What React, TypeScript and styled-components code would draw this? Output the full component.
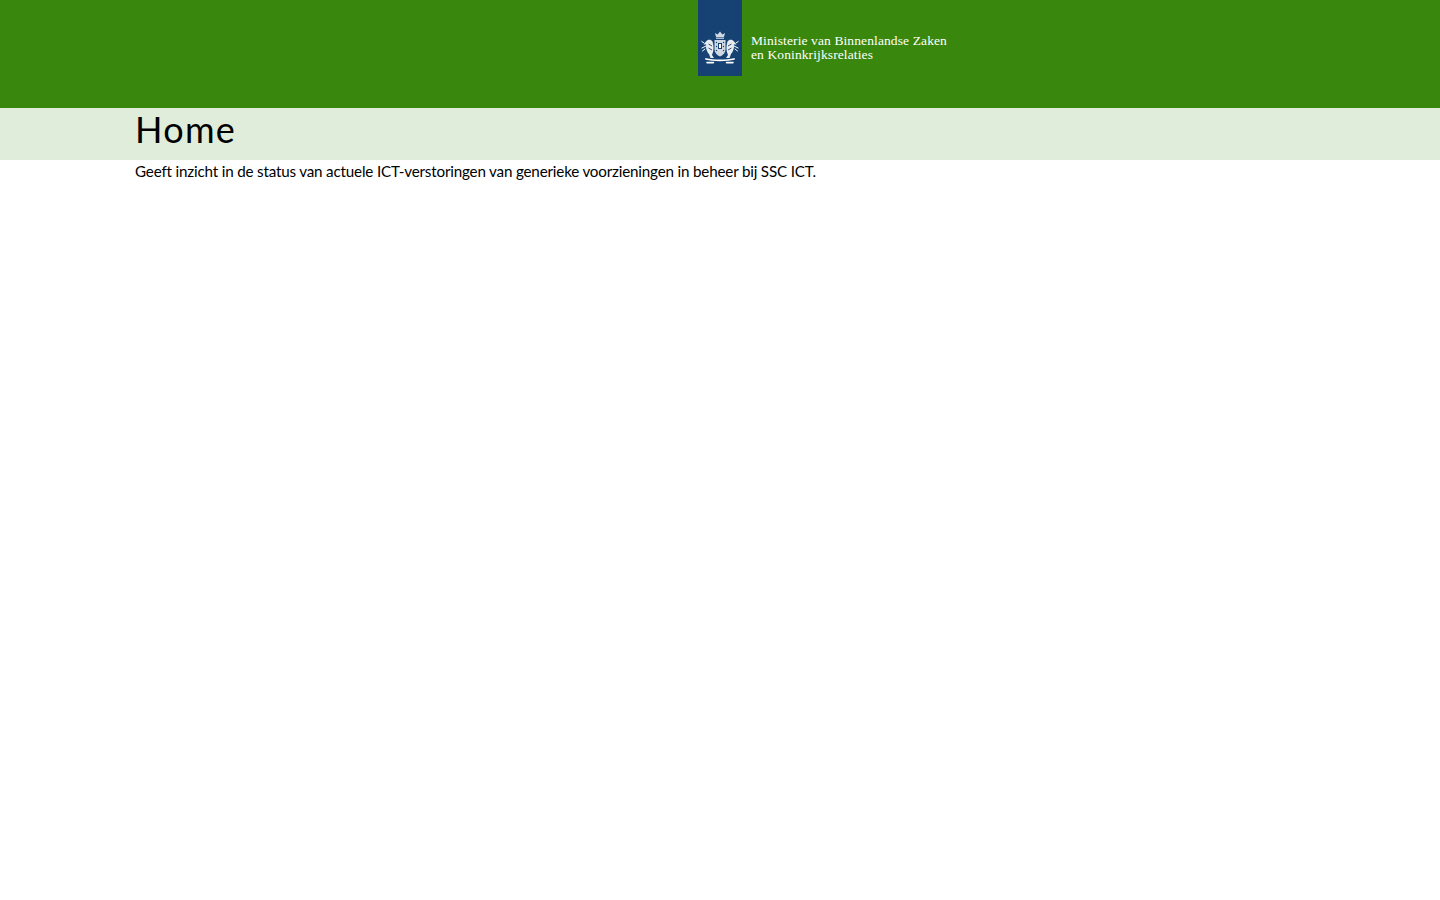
import React from "react";
import styled, { createGlobalStyle } from "styled-components";

const Global = createGlobalStyle`
  html, body { margin: 0; padding: 0; background: #fff; }
  body { font-family: "Lato", "Noto Sans", sans-serif; color: #000; }
`;

const Header = styled.header`
  height: 108px;
  background: #39870c;
  padding-left: calc(50% - 22px);
  box-sizing: border-box;
`;

const Logo = styled.a`
  display: flex;
  align-items: flex-start;
  gap: 9px;
`;

const Ribbon = styled.div`
  width: 44px;
  height: 76px;
  background: #154273;
  display: flex;
  justify-content: center;
  padding-top: 31px;
  box-sizing: border-box;
  flex: none;
`;

const Wordmark = styled.div`
  margin-top: 34px;
  font-family: "Liberation Serif", serif;
  font-size: 13.5px;
  line-height: 14px;
  letter-spacing: 0.11px;
  color: #fff;
  white-space: nowrap;
`;

const TitleBar = styled.div`
  height: 52px;
  background: #e1eddb;
  padding-left: 135px;
`;

const Title = styled.h1`
  margin: 0;
  font-family: "Lato", sans-serif;
  font-weight: 400;
  font-size: 36px;
  line-height: 43px;
  letter-spacing: 1.3px;
`;

const Intro = styled.p`
  margin: 0;
  padding: 2px 0 0 135px;
  font-family: "Lato", sans-serif;
  font-size: 15.2px;
  line-height: 19px;
  letter-spacing: -0.18px;
`;

const Emblem = () => (
  <svg width="38" height="33" viewBox="0 0 38 33" fill="none">
    <g fill="#fff">
      <path d="M15 6 L14 2 L16.6 3.6 L19 0.4 L21.4 3.6 L24 2 L23 6 Z" opacity="0.8" />
      <rect x="15" y="6.6" width="8" height="1.2" opacity="0.8" />
      <path d="M13.5 9 H24.5 V18 C24.5 21.5 22.5 24 19 25.5 C15.5 24 13.5 21.5 13.5 18 Z" opacity="0.8" />
      <path d="M5 10.5 C6.5 8 10 8 11.5 10.5 C13 15 13 20 11 24 L13 27 H9.5 L8 23 C6 21 4.5 17 5.2 13.5 L2.5 13.5 Z" opacity="0.9" />
      <path d="M33 10.5 C31.5 8 28 8 26.5 10.5 C25 15 25 20 27 24 L25 27 H28.5 L30 23 C32 21 33.5 17 32.8 13.5 L35.5 13.5 Z" opacity="0.9" />
    </g>
    <g stroke="#fff" strokeLinecap="round" strokeLinejoin="round" strokeWidth="1">
      <path d="M5 15 L1 17 M3 12 L0.8 10.5 M4 18 L1.5 20" />
      <path d="M33 15 L37 17 M35 12 L37.2 10.5 M34 18 L36.5 20" />
      <path d="M5 28 C12 29.8 26 29.8 33 28" strokeWidth="1.8" />
      <path d="M6 31.6 H12.5 M25.5 31.6 H32" strokeWidth="1.6" />
    </g>
    <g fill="#154273">
      <path d="M17 12 H21 V18 H17 Z" />
      <circle cx="15.5" cy="11.5" r="0.7" />
      <circle cx="22.5" cy="11.5" r="0.7" />
      <circle cx="15.5" cy="15.5" r="0.7" />
      <circle cx="22.5" cy="15.5" r="0.7" />
      <circle cx="15.5" cy="19.5" r="0.7" />
      <circle cx="22.5" cy="19.5" r="0.7" />
      <path d="M7.5 13 L11 15 M7.5 17 L11 19 M30.5 13 L27 15 M30.5 17 L27 19" stroke="#154273" strokeWidth="0.9" />
    </g>
    <path d="M18 13 h2 v4 h-2 Z" fill="#fff" />
  </svg>
);

export default function App() {
  return (
    <>
      <Global />
      <Header>
        <Logo>
          <Ribbon>
            <Emblem />
          </Ribbon>
          <Wordmark>
            Ministerie van Binnenlandse Zaken
            <br />
            en Koninkrijksrelaties
          </Wordmark>
        </Logo>
      </Header>
      <TitleBar>
        <Title>Home</Title>
      </TitleBar>
      <Intro>
        Geeft inzicht in de status van actuele ICT-verstoringen van generieke voorzieningen in beheer bij SSC ICT.
      </Intro>
    </>
  );
}
